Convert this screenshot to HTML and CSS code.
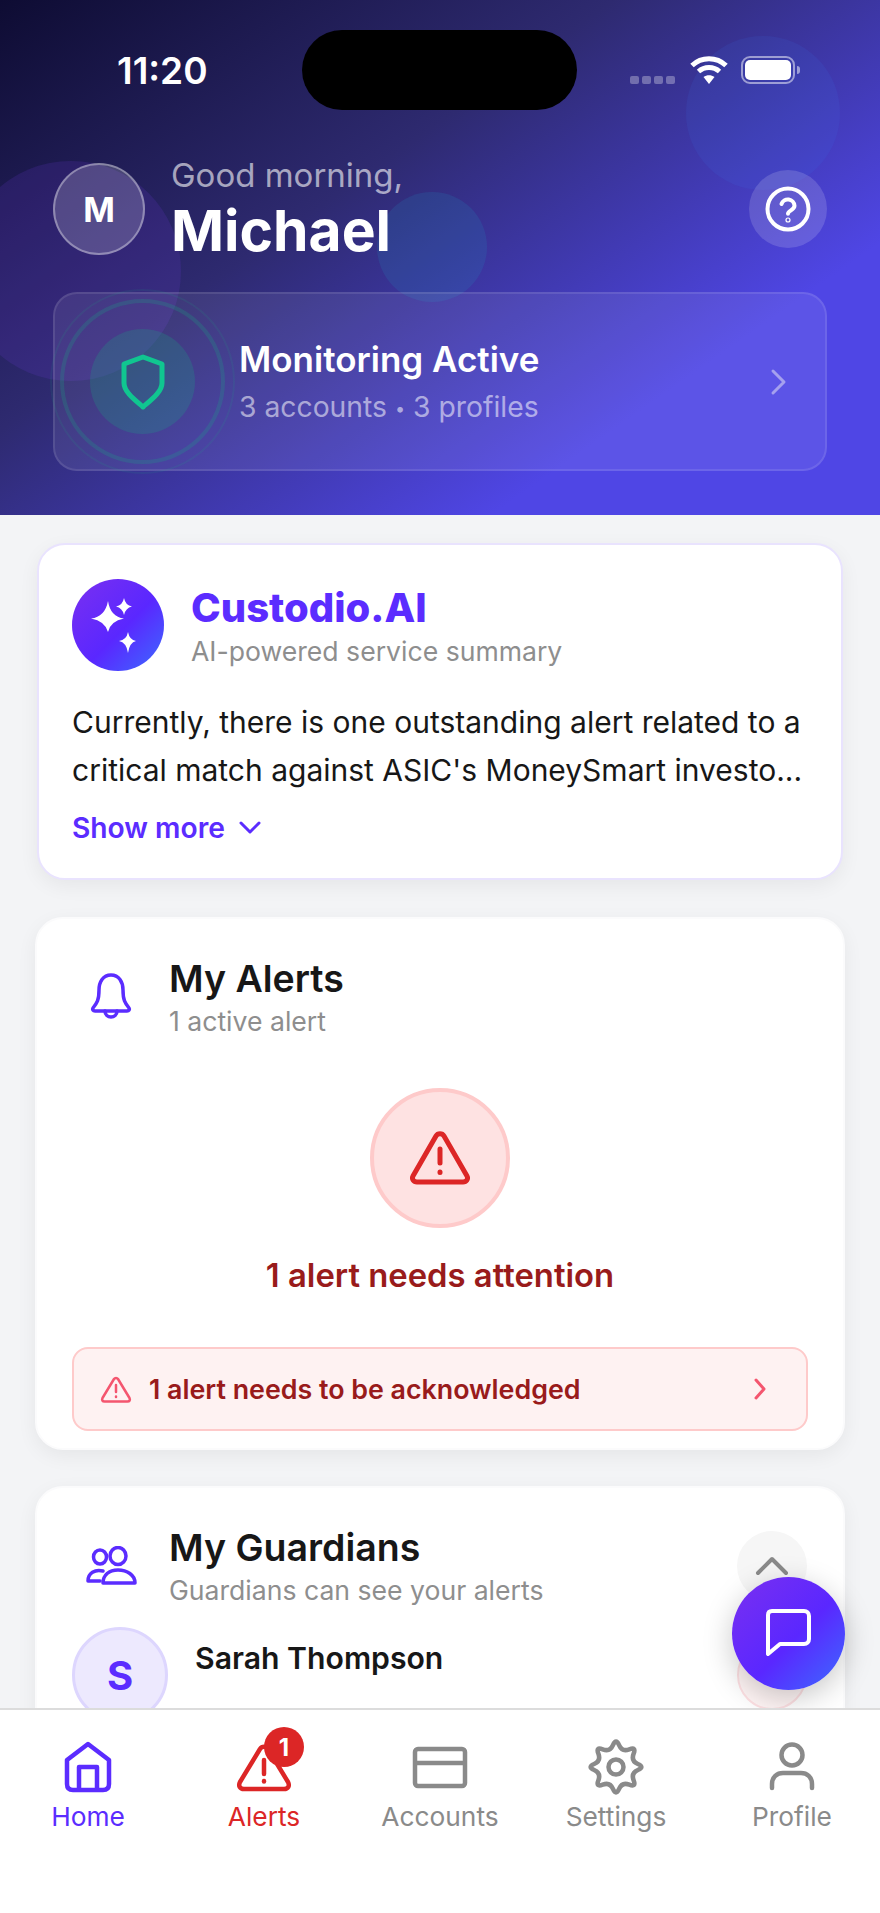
FILE: index.html
```html
<!DOCTYPE html>
<html lang="en">
<head>
    <meta charset="UTF-8">
    <meta name="viewport" content="width=device-width, initial-scale=1.0">
    <title>Custodio Home</title>
    <link rel="stylesheet" href="styles.css">
</head>
<body>
<div class="phone">
    <header class="header">
        <span class="bubble bubble-left"></span>
        <span class="bubble bubble-right"></span>
        <span class="bubble bubble-mid"></span>

        <div class="status-bar">
            <span class="time">11:20</span>
            <span class="island"></span>
            <div class="status-icons">
                <span class="signal"><i></i><i></i><i></i><i></i></span>
                <svg class="wifi" width="38" height="30" viewBox="0 0 38 30">
                    <path d="M2 10.5C11.5 1.5 26.5 1.5 36 10.500" fill="none" stroke="#fff" stroke-width="5"/>
                    <path d="M8.500 16.500C14.500 11.200 23.500 11.200 29.500 16.500" fill="none" stroke="#fff" stroke-width="5"/>
                    <path d="M13.500 22C16.800 19.600 21.200 19.600 24.500 22L19 29Z" fill="#fff"/>
                </svg>
                <span class="battery"><i class="battery-fill"></i></span>
                <span class="battery-tip"></span>
            </div>
        </div>

        <div class="greeting">
            <div class="avatar-m">M</div>
            <div class="greeting-text">
                <p class="hello">Good morning,</p>
                <p class="name">Michael</p>
            </div>
            <button class="help-btn">
                <svg width="46" height="46" viewBox="0 0 46 46" fill="none" stroke="#fff" stroke-width="4" stroke-linecap="round">
                    <circle cx="23" cy="23" r="20.500"/>
                    <path d="M16.500 18a6.700 6.700 0 0 1 13 1.800c0 4.200-6.500 4.700-6.500 8"/>
                    <circle cx="23" cy="34" r=".6"/>
                </svg>
            </button>
        </div>

        <div class="monitor-card">
            <div class="shield">
                <svg width="50" height="58" viewBox="0 0 50 58" fill="none" stroke="#10c690" stroke-width="5" stroke-linejoin="round">
                    <path d="M25 4L44 11V30C44 39 33 47 25 54C17 47 6 39 6 30V11Z"/>
                </svg>
            </div>
            <div class="monitor-text">
                <p class="monitor-title">Monitoring Active</p>
                <p class="monitor-sub">3 accounts <span class="dot">•</span> 3 profiles</p>
            </div>
            <svg class="monitor-arrow" width="20" height="30" viewBox="0 0 20 30" fill="none" stroke="#a5a0ee" stroke-width="3" stroke-linecap="round" stroke-linejoin="round">
                <path d="M4 4L15 15L4 26"/>
            </svg>
        </div>
    </header>

    <main class="content">
        <section class="card ai-card">
            <div class="ai-head">
                <div class="ai-logo">
                    <svg width="92" height="92" viewBox="0 0 92 92" fill="#fff">
                        <path d="M36 22Q38.500 38 52 39.500Q38.500 42 36 53Q33 42 19 39.500Q33 38 36 22Z"/>
                        <path d="M52 19Q53.500 26.500 60 27.500Q53.500 29 52 36Q50.500 29 44 27.500Q50.500 26.500 52 19Z"/>
                        <path d="M56 53Q57.500 61 64 62Q57.500 63.500 56 74Q54.500 63.500 47 62Q54.500 61 56 53Z"/>
                    </svg>
                </div>
                <div>
                    <h2 class="ai-title">Custodio.AI</h2>
                    <p class="subtitle">AI-powered service summary</p>
                </div>
            </div>
            <p class="ai-text">Currently, there is one outstanding alert related to a critical match against ASIC's MoneySmart investo...</p>
            <a class="show-more">Show more
                <svg width="24" height="16" viewBox="0 0 24 16" fill="none" stroke="#5b2cff" stroke-width="3" stroke-linecap="round" stroke-linejoin="round">
                    <path d="M3 3L12 12L21 3"/>
                </svg>
            </a>
        </section>

        <section class="card alerts-card">
            <div class="card-head">
                <div class="head-icon">
                    <svg width="44" height="50" viewBox="0 0 44 50" fill="none" stroke="#5b2cff" stroke-width="3.500" stroke-linecap="round" stroke-linejoin="round">
                        <path d="M22 3C14 3 10 10 10 18C10 28 8 31 4 36C3 37.500 4 39 6 39H38C40 39 41 37.500 40 36C36 31 34 28 34 18C34 10 30 3 22 3Z"/>
                        <path d="M16 39C16 47 28 47 28 39"/>
                    </svg>
                </div>
                <div>
                    <h2 class="card-title">My Alerts</h2>
                    <p class="subtitle">1 active alert</p>
                </div>
            </div>
            <div class="alert-circle">
                <svg width="62" height="56" viewBox="0 0 62 56" fill="none" stroke="#dc2626" stroke-width="5" stroke-linecap="round" stroke-linejoin="round">
                    <path d="M27 6C28.800 3 33.200 3 35 6L58 46C59.500 49 57.500 52 54 52H8C4.500 52 2.500 49 4 46Z"/>
                    <path d="M31 19V33"/>
                    <path d="M31 42V42.500"/>
                </svg>
            </div>
            <p class="alert-msg">1 alert needs attention</p>
            <div class="alert-banner">
                <svg width="32" height="28" viewBox="0 0 32 28" fill="none" stroke="#f4566f" stroke-width="2.500" stroke-linecap="round" stroke-linejoin="round">
                    <path d="M14 4C15 2.500 17 2.500 18 4L29.500 23C30.500 25 29.500 26.500 27.500 26.500H4.500C2.500 26.500 1.500 25 2.500 23Z"/>
                    <path d="M16 10V17"/>
                    <path d="M16 21.500V22"/>
                </svg>
                <span class="banner-text">1 alert needs to be acknowledged</span>
                <svg class="banner-arrow" width="16" height="24" viewBox="0 0 16 24" fill="none" stroke="#f4566f" stroke-width="3" stroke-linecap="round" stroke-linejoin="round">
                    <path d="M4 3L12 12L4 21"/>
                </svg>
            </div>
        </section>

        <section class="card guardians-card">
            <div class="card-head">
                <div class="head-icon">
                    <svg width="52" height="40" viewBox="0 0 52 40" fill="none" stroke="#5b2cff" stroke-width="3.500" stroke-linecap="round" stroke-linejoin="round">
                        <ellipse cx="15" cy="11" rx="6.500" ry="7"/>
                        <ellipse cx="33" cy="10" rx="8" ry="8.500"/>
                        <path d="M18 25C10 23 3 27 3 35H15"/>
                        <path d="M18 37C18 29 24 24 33 24C42 24 50 29 50 37Z"/>
                    </svg>
                </div>
                <div>
                    <h2 class="card-title">My Guardians</h2>
                    <p class="subtitle">Guardians can see your alerts</p>
                </div>
                <button class="collapse-btn">
                    <svg width="34" height="20" viewBox="0 0 34 20" fill="none" stroke="#8a8a8a" stroke-width="4" stroke-linecap="round" stroke-linejoin="round">
                        <path d="M3 17L17 3L31 17"/>
                    </svg>
                </button>
            </div>
            <div class="guardian-row">
                <div class="guardian-avatar">S</div>
                <p class="guardian-name">Sarah Thompson</p>
                <span class="guardian-btn"></span>
            </div>
        </section>
    </main>

    <button class="fab">
        <svg width="50" height="50" viewBox="0 0 50 50" fill="none" stroke="#fff" stroke-width="4" stroke-linecap="round" stroke-linejoin="round">
            <path d="M8 2H40C43 2 45 4 45 7V30C45 33 43 35 40 35H16L4 45V6C4 4 5 2 8 2Z"/>
        </svg>
    </button>

    <nav class="tabbar">
        <a class="tab tab-home">
            <span class="tab-icon">
                <svg width="50" height="54" viewBox="0 0 50 54" fill="none" stroke="currentColor" stroke-width="4.500" stroke-linejoin="round">
                    <path d="M25 4L46 20V44C46 48 44 50 40 50H10C6 50 4 48 4 44V20Z"/>
                    <path d="M16 50V27H34V50"/>
                </svg>
            </span>
            <span class="tab-label">Home</span>
        </a>
        <a class="tab tab-alerts">
            <span class="tab-icon">
                <svg width="56" height="54" viewBox="0 0 56 54" fill="none" stroke="currentColor" stroke-width="4.500" stroke-linecap="round" stroke-linejoin="round">
                    <path d="M24 9C26 6 30 6 32 9L52 42C54 46 52 49 48 49H8C4 49 2 46 4 42Z"/>
                    <path d="M28 20V34"/>
                    <path d="M28 41V41.500"/>
                </svg>
                <span class="tab-badge">1</span>
            </span>
            <span class="tab-label">Alerts</span>
        </a>
        <a class="tab">
            <span class="tab-icon">
                <svg width="56" height="54" viewBox="0 0 56 54" fill="none" stroke="currentColor" stroke-width="4.500" stroke-linejoin="round">
                    <rect x="3" y="9" width="50" height="37" rx="3"/>
                    <path d="M3 23H53"/>
                </svg>
            </span>
            <span class="tab-label">Accounts</span>
        </a>
        <a class="tab">
            <span class="tab-icon">
                <svg width="62" height="62" viewBox="0 0 24 24" fill="none" stroke="currentColor" stroke-width="1.750" stroke-linejoin="round">
                    <path d="M10.820 3.540Q12 .8 13.190 3.540Q14.370 6.270 17.150 5.180Q19.920 4.080 18.830 6.850Q17.730 9.630 20.470 10.820Q23.200 12 20.470 13.180Q17.730 14.370 18.830 17.150Q19.920 19.920 17.150 18.830Q14.370 17.730 13.190 20.470Q12 23.200 10.820 20.470Q9.630 17.730 6.850 18.830Q4.080 19.920 5.180 17.150Q6.270 14.370 3.540 13.180Q.8 12 3.540 10.820Q6.270 9.630 5.180 6.850Q4.080 4.080 6.850 5.180Q9.630 6.270 10.820 3.540Z"/>
                    <circle cx="12" cy="12" r="2.900"/>
                </svg>
            </span>
            <span class="tab-label">Settings</span>
        </a>
        <a class="tab">
            <span class="tab-icon">
                <svg width="46" height="54" viewBox="0 0 46 54" fill="none" stroke="currentColor" stroke-width="4.500" stroke-linecap="round">
                    <circle cx="23" cy="15" r="10.500"/>
                    <path d="M3 48V44C3 37 8 33 14 33H32C38 33 43 37 43 44V48"/>
                </svg>
            </span>
            <span class="tab-label">Profile</span>
        </a>
    </nav>
</div>
</body>
</html>
```

FILE: styles.css
```css
* {
    box-sizing: border-box;
}
body {
    margin: 0;
    font-family: Inter, "Liberation Sans", sans-serif;
    background-color: #f3f4f6;
    color: #171717;
}
p, h2 {
    margin: 0;
}
button {
    border: none;
    padding: 0;
}
.phone {
    position: relative;
    width: 880px;
    height: 1913px;
    display: flex;
    flex-direction: column;
    overflow: hidden;
}

/* header */
.header {
    position: relative;
    flex: none;
    height: 515px;
    padding: 30px 53px 0;
    overflow: hidden;
    background: linear-gradient(145deg, #0e0c33 0%, #2e2a70 38%, #4f46e5 76%);
}
.bubble {
    position: absolute;
    border-radius: 50%;
}
.bubble-left {
    left: -39px;
    top: 161px;
    width: 220px;
    height: 220px;
    background-color: rgba(124, 58, 237, 0.15);
}
.bubble-right {
    left: 686px;
    top: 36px;
    width: 154px;
    height: 154px;
    background-color: rgba(59, 130, 246, 0.1);
}
.bubble-mid {
    left: 377px;
    top: 192px;
    width: 110px;
    height: 110px;
    background-color: rgba(34, 140, 190, 0.18);
}
.status-bar {
    position: relative;
    display: flex;
    align-items: center;
    height: 80px;
}
.time {
    width: 249px;
    padding-left: 64px;
    color: #fff;
    font-size: 37px;
    font-weight: 600;
}
.island {
    width: 275px;
    height: 80px;
    border-radius: 40px;
    background-color: #000;
}
.status-icons {
    display: flex;
    align-items: center;
    margin-left: 53px;
}
.signal {
    display: flex;
    gap: 3px;
    margin-top: 20px;
    margin-right: 15px;
}
.signal i {
    width: 9px;
    height: 8px;
    border-radius: 2px;
    background-color: rgba(255, 255, 255, 0.3);
}
.battery {
    width: 54px;
    height: 28px;
    margin-left: 13px;
    padding: 2px;
    border: 2px solid rgba(255, 255, 255, 0.5);
    border-radius: 9px;
}
.battery-fill {
    display: block;
    height: 100%;
    border-radius: 5px;
    background-color: #fff;
}
.battery-tip {
    width: 3px;
    height: 8px;
    margin-left: 2px;
    border-radius: 0 3px 3px 0;
    background-color: rgba(255, 255, 255, 0.5);
}
.greeting {
    position: relative;
    display: flex;
    align-items: center;
    height: 92px;
    margin-top: 53px;
}
.avatar-m {
    width: 92px;
    height: 92px;
    display: flex;
    align-items: center;
    justify-content: center;
    border: 2px solid rgba(255, 255, 255, 0.35);
    border-radius: 50%;
    background-color: rgba(255, 255, 255, 0.18);
    color: #fff;
    font-size: 34px;
    font-weight: 700;
}
.greeting-text {
    margin-left: 26px;
}
.hello {
    color: rgba(255, 255, 255, 0.6);
    font-size: 33px;
    line-height: 40px;
    margin-top: -1px;
}
.name {
    color: #fff;
    font-size: 57px;
    font-weight: 700;
    line-height: 64px;
    margin-top: 4px;
}
.help-btn {
    width: 78px;
    height: 78px;
    margin-left: auto;
    display: flex;
    align-items: center;
    justify-content: center;
    border-radius: 50%;
    background-color: rgba(255, 255, 255, 0.15);
}
.monitor-card {
    position: relative;
    display: flex;
    align-items: center;
    height: 179px;
    margin-top: 37px;
    padding-left: 35px;
    border: 2px solid rgba(255, 255, 255, 0.1);
    border-radius: 24px;
    background-color: rgba(255, 255, 255, 0.08);
}
.shield {
    position: relative;
    flex: none;
    width: 105px;
    height: 105px;
    display: flex;
    align-items: center;
    justify-content: center;
    border-radius: 50%;
    background-color: rgba(16, 185, 129, 0.2);
}
.shield::before {
    content: "";
    position: absolute;
    inset: -30px;
    border: 4px solid rgba(16, 185, 129, 0.2);
    border-radius: 50%;
}
.shield::after {
    content: "";
    position: absolute;
    inset: -40px;
    border: 2px solid rgba(16, 185, 129, 0.1);
    border-radius: 50%;
}
.monitor-text {
    margin-left: 44px;
}
.monitor-title {
    color: #fff;
    font-size: 35px;
    font-weight: 600;
    line-height: 44px;
}
.monitor-sub {
    color: rgba(255, 255, 255, 0.55);
    font-size: 28.300px;
    line-height: 36px;
    margin-top: 8px;
}
.dot {
    font-size: 18px;
    vertical-align: 2px;
}
.monitor-arrow {
    margin-left: auto;
    margin-right: 36px;
}

/* cards */
.content {
    flex: 1;
    min-height: 0;
    overflow: hidden;
    display: flex;
    flex-direction: column;
    gap: 37px;
    padding: 28px 35px 0;
}
.card {
    flex: none;
    background-color: #fff;
    border: 2px solid #fbfbfc;
    border-radius: 28px;
    padding: 37px 35px 36px;
    box-shadow: 0 6px 20px rgba(0, 0, 0, 0.06);
}
.ai-card {
    height: 337px;
    margin: 0 2px;
    padding: 34px 33px 0;
    border-color: #e9e3fe;
}
.ai-head {
    display: flex;
    align-items: center;
    gap: 27px;
}
.ai-logo, .fab {
    border-radius: 50%;
    background: linear-gradient(135deg, #7a30f0 0%, #5a27ff 55%, #3c6bff 100%);
}
.ai-logo {
    width: 92px;
    height: 92px;
}
.ai-title {
    color: #5b2cff;
    font-size: 40px;
    font-weight: 800;
    line-height: 46px;
    margin: 2px 0 3px;
}
.subtitle {
    color: #8e8e8e;
    font-size: 26.600px;
    line-height: 34px;
}
.ai-text {
    margin-top: 27px;
    font-size: 30px;
    line-height: 48px;
}
.show-more {
    display: flex;
    align-items: center;
    gap: 13px;
    margin-top: 14px;
    color: #5b2cff;
    font-size: 28.200px;
    font-weight: 600;
    line-height: 40px;
}
.alerts-card {
    height: 533px;
    margin-bottom: -1px;
}
.card-head {
    display: flex;
    align-items: center;
}
.head-icon {
    width: 78px;
    margin-right: 19px;
    display: flex;
    justify-content: center;
    flex: none;
}
.card-title {
    font-size: 37.500px;
    font-weight: 600;
    line-height: 46px;
    margin-bottom: 2px;
}
.alert-circle {
    width: 140px;
    height: 140px;
    margin: 50px auto 0;
    display: flex;
    align-items: center;
    justify-content: center;
    border: 4px solid #fecaca;
    border-radius: 50%;
    background-color: #fee2e2;
}
.alert-msg {
    margin-top: 27px;
    text-align: center;
    color: #991b1b;
    font-size: 32.800px;
    font-weight: 600;
    line-height: 40px;
}
.alert-banner {
    display: flex;
    align-items: center;
    height: 84px;
    margin-top: 52px;
    padding: 0 38px 0 26px;
    border: 2px solid #fecaca;
    border-radius: 16px;
    background-color: #fef2f2;
}
.banner-text {
    margin-left: 17px;
    color: #991b1b;
    font-size: 26.800px;
    font-weight: 600;
}
.banner-arrow {
    margin-left: auto;
}
.guardians-card {
    height: 400px;
}
.collapse-btn {
    width: 70px;
    height: 70px;
    margin-left: auto;
    margin-right: 1px;
    display: flex;
    align-items: center;
    justify-content: center;
    border-radius: 50%;
    background-color: #f6f6f6;
}
.guardian-row {
    display: flex;
    margin-top: 20px;
}
.guardian-avatar {
    width: 96px;
    height: 96px;
    display: flex;
    align-items: center;
    justify-content: center;
    border: 3px solid #ddd6fe;
    border-radius: 50%;
    background-color: #ede9fe;
    color: #5b2cff;
    font-size: 40px;
    font-weight: 700;
}
.guardian-name {
    margin-left: 27px;
    font-size: 30.200px;
    font-weight: 600;
    line-height: 40px;
    margin-top: 11px;
}
.guardian-btn {
    width: 70px;
    height: 70px;
    margin-left: auto;
    margin-right: 1px;
    margin-top: 13px;
    border: 2px solid #fde0e3;
    border-radius: 50%;
    background-color: #fff5f5;
}

/* floating chat */
.fab {
    position: absolute;
    left: 732px;
    top: 1577px;
    width: 113px;
    height: 113px;
    display: flex;
    align-items: center;
    justify-content: center;
    box-shadow: 0 8px 30px rgba(0, 0, 0, 0.22);
}

/* bottom tabs */
.tabbar {
    position: relative;
    flex: none;
    height: 205px;
    display: grid;
    grid-template-columns: repeat(5, 176px);
    border-top: 2px solid #dcdcdc;
    background-color: #fff;
    padding-top: 30px;
}
.tab {
    display: flex;
    flex-direction: column;
    align-items: center;
    color: #8a8a8a;
}
.tab-home {
    color: #5b2cff;
}
.tab-alerts {
    color: #dc2626;
}
.tab-icon {
    position: relative;
    height: 54px;
    display: flex;
    align-items: center;
    justify-content: center;
}
.tab-badge {
    position: absolute;
    left: 28px;
    top: -13px;
    width: 40px;
    height: 40px;
    display: flex;
    align-items: center;
    justify-content: center;
    border-radius: 50%;
    background-color: #dc2626;
    color: #fff;
    font-size: 24px;
    font-weight: 700;
}
.tab-label {
    margin-top: 6px;
    font-size: 26.300px;
    line-height: 34px;
}
```
